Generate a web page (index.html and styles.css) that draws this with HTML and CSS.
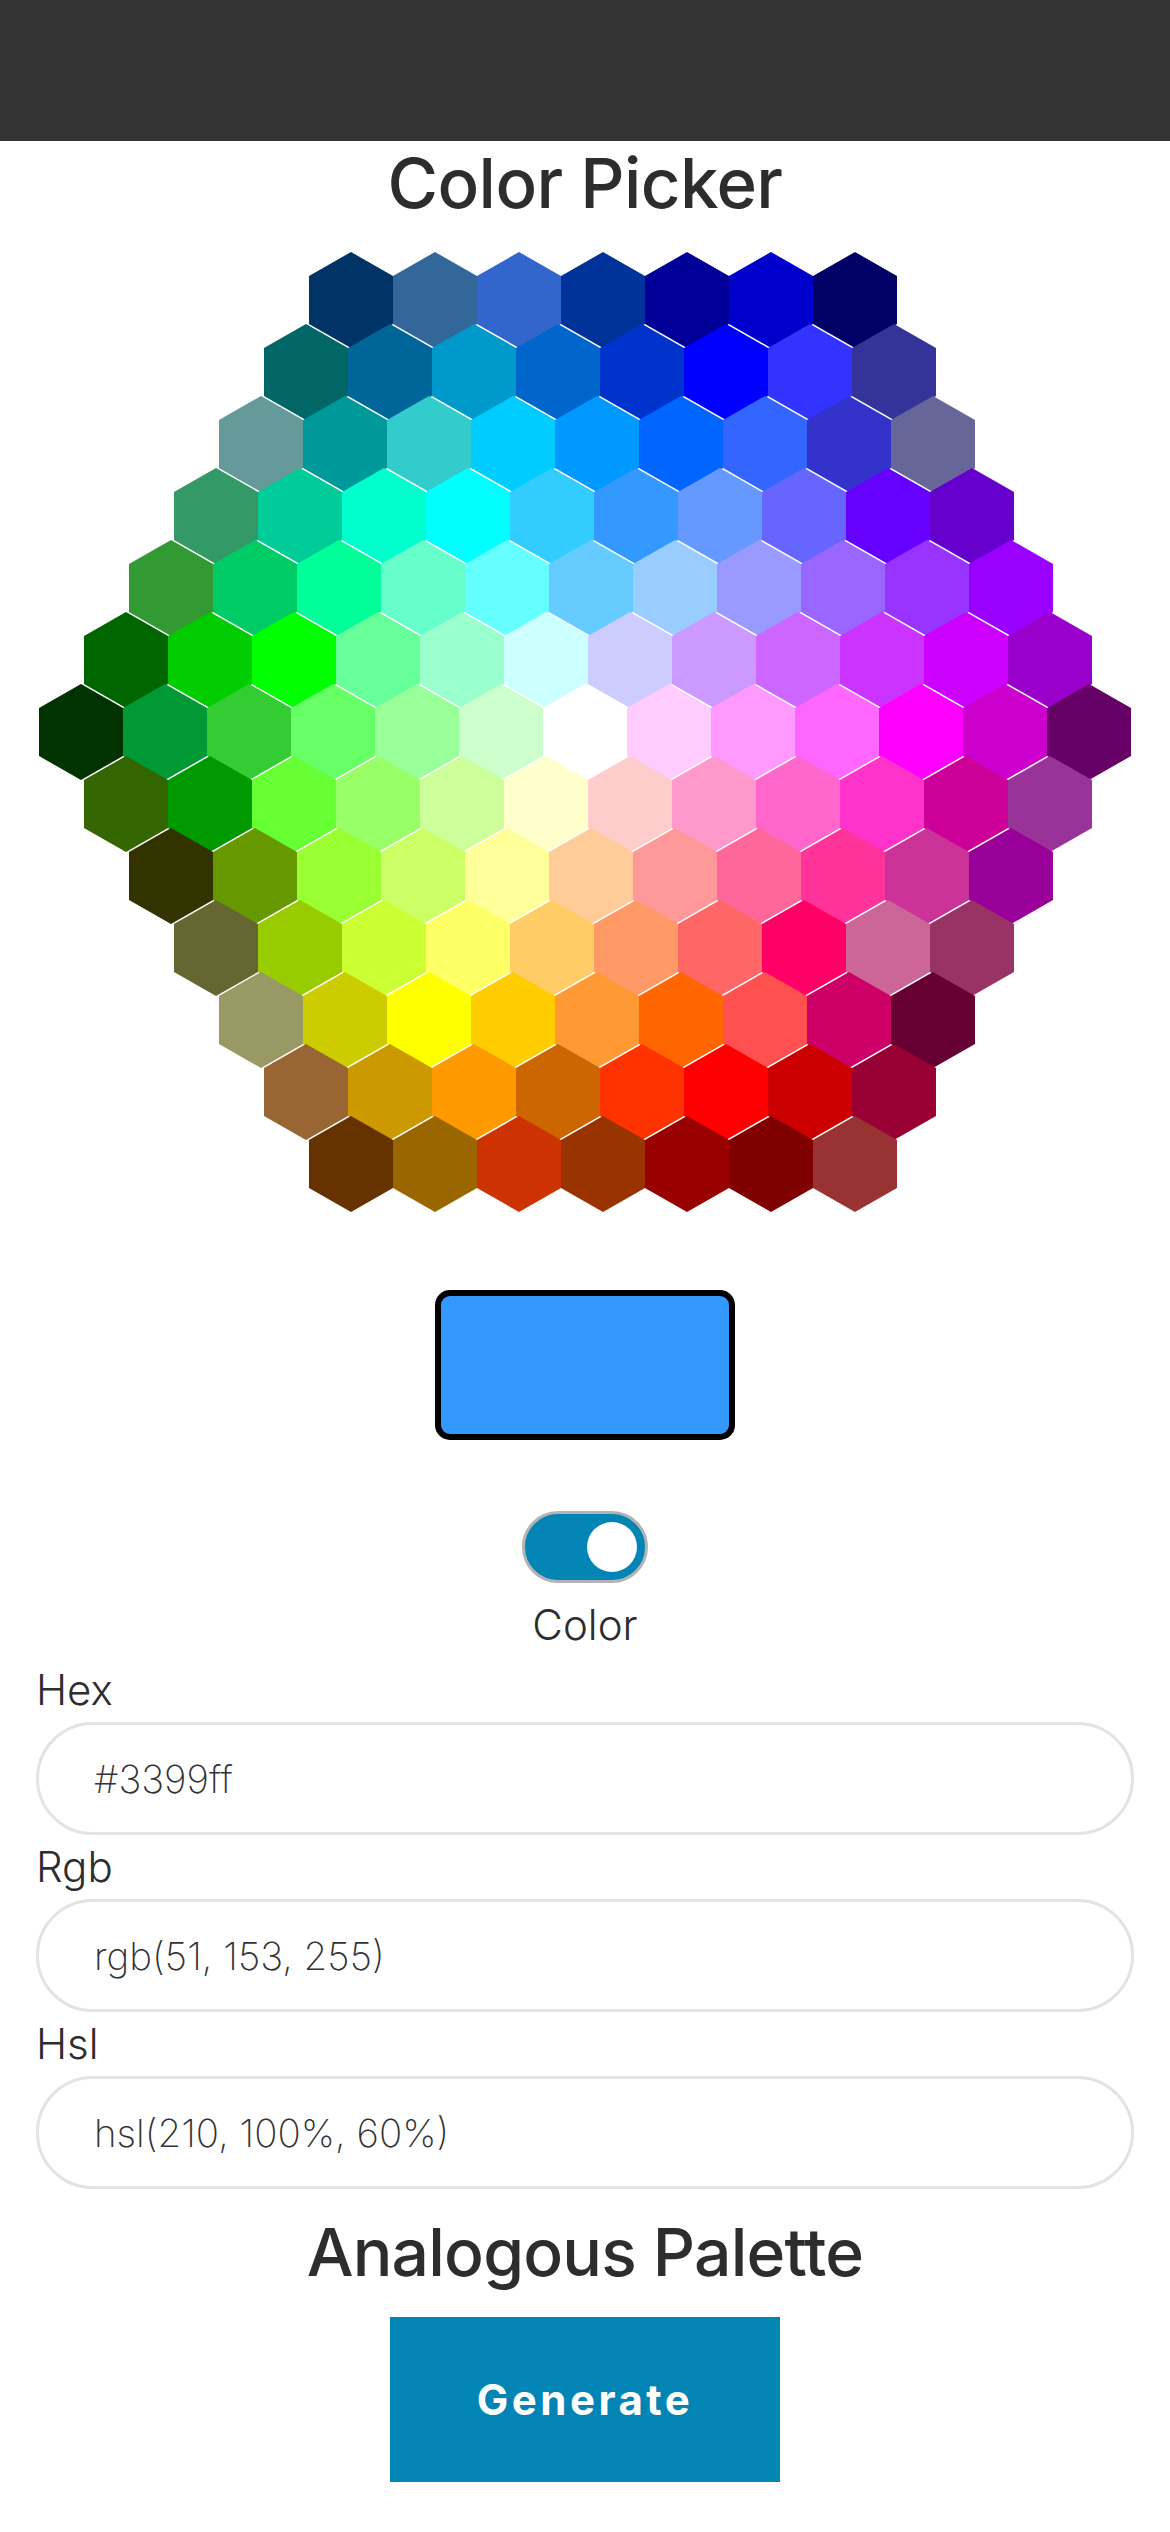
FILE: index.html
```html
<!DOCTYPE html>
<html lang="en">
<head>
<meta charset="utf-8">
<title>Color Picker</title>
<link rel="stylesheet" href="styles.css">
</head>
<body>
<header class="topbar"></header>
<main class="page">
  <h1 class="title">Color Picker</h1>
  <div class="map">
    <div class="row row-1">
      <div class="hex" style="background:#003366"></div><div class="hex" style="background:#336699"></div><div class="hex" style="background:#3366cc"></div><div class="hex" style="background:#003399"></div><div class="hex" style="background:#000099"></div><div class="hex" style="background:#0000cc"></div><div class="hex" style="background:#000066"></div>
    </div>
    <div class="row row-2">
      <div class="hex" style="background:#006666"></div><div class="hex" style="background:#006699"></div><div class="hex" style="background:#0099cc"></div><div class="hex" style="background:#0066cc"></div><div class="hex" style="background:#0033cc"></div><div class="hex" style="background:#0000ff"></div><div class="hex" style="background:#3333ff"></div><div class="hex" style="background:#333399"></div>
    </div>
    <div class="row row-3">
      <div class="hex" style="background:#669999"></div><div class="hex" style="background:#009999"></div><div class="hex" style="background:#33cccc"></div><div class="hex" style="background:#00ccff"></div><div class="hex" style="background:#0099ff"></div><div class="hex" style="background:#0066ff"></div><div class="hex" style="background:#3366ff"></div><div class="hex" style="background:#3333cc"></div><div class="hex" style="background:#666699"></div>
    </div>
    <div class="row row-4">
      <div class="hex" style="background:#339966"></div><div class="hex" style="background:#00cc99"></div><div class="hex" style="background:#00ffcc"></div><div class="hex" style="background:#00ffff"></div><div class="hex" style="background:#33ccff"></div><div class="hex" style="background:#3399ff"></div><div class="hex" style="background:#6699ff"></div><div class="hex" style="background:#6666ff"></div><div class="hex" style="background:#6600ff"></div><div class="hex" style="background:#6600cc"></div>
    </div>
    <div class="row row-5">
      <div class="hex" style="background:#339933"></div><div class="hex" style="background:#00cc66"></div><div class="hex" style="background:#00ff99"></div><div class="hex" style="background:#66ffcc"></div><div class="hex" style="background:#66ffff"></div><div class="hex" style="background:#66ccff"></div><div class="hex" style="background:#99ccff"></div><div class="hex" style="background:#9999ff"></div><div class="hex" style="background:#9966ff"></div><div class="hex" style="background:#9933ff"></div><div class="hex" style="background:#9900ff"></div>
    </div>
    <div class="row row-6">
      <div class="hex" style="background:#006600"></div><div class="hex" style="background:#00cc00"></div><div class="hex" style="background:#00ff00"></div><div class="hex" style="background:#66ff99"></div><div class="hex" style="background:#99ffcc"></div><div class="hex" style="background:#ccffff"></div><div class="hex" style="background:#ccccff"></div><div class="hex" style="background:#cc99ff"></div><div class="hex" style="background:#cc66ff"></div><div class="hex" style="background:#cc33ff"></div><div class="hex" style="background:#cc00ff"></div><div class="hex" style="background:#9900cc"></div>
    </div>
    <div class="row row-7">
      <div class="hex" style="background:#003300"></div><div class="hex" style="background:#009933"></div><div class="hex" style="background:#33cc33"></div><div class="hex" style="background:#66ff66"></div><div class="hex" style="background:#99ff99"></div><div class="hex" style="background:#ccffcc"></div><div class="hex" style="background:#ffffff"></div><div class="hex" style="background:#ffccff"></div><div class="hex" style="background:#ff99ff"></div><div class="hex" style="background:#ff66ff"></div><div class="hex" style="background:#ff00ff"></div><div class="hex" style="background:#cc00cc"></div><div class="hex" style="background:#660066"></div>
    </div>
    <div class="row row-6">
      <div class="hex" style="background:#336600"></div><div class="hex" style="background:#009900"></div><div class="hex" style="background:#66ff33"></div><div class="hex" style="background:#99ff66"></div><div class="hex" style="background:#ccff99"></div><div class="hex" style="background:#ffffcc"></div><div class="hex" style="background:#ffcccc"></div><div class="hex" style="background:#ff99cc"></div><div class="hex" style="background:#ff66cc"></div><div class="hex" style="background:#ff33cc"></div><div class="hex" style="background:#cc0099"></div><div class="hex" style="background:#993399"></div>
    </div>
    <div class="row row-5">
      <div class="hex" style="background:#333300"></div><div class="hex" style="background:#669900"></div><div class="hex" style="background:#99ff33"></div><div class="hex" style="background:#ccff66"></div><div class="hex" style="background:#ffff99"></div><div class="hex" style="background:#ffcc99"></div><div class="hex" style="background:#ff9999"></div><div class="hex" style="background:#ff6699"></div><div class="hex" style="background:#ff3399"></div><div class="hex" style="background:#cc3399"></div><div class="hex" style="background:#990099"></div>
    </div>
    <div class="row row-4">
      <div class="hex" style="background:#666633"></div><div class="hex" style="background:#99cc00"></div><div class="hex" style="background:#ccff33"></div><div class="hex" style="background:#ffff66"></div><div class="hex" style="background:#ffcc66"></div><div class="hex" style="background:#ff9966"></div><div class="hex" style="background:#ff6666"></div><div class="hex" style="background:#ff0066"></div><div class="hex" style="background:#cc6699"></div><div class="hex" style="background:#993366"></div>
    </div>
    <div class="row row-3">
      <div class="hex" style="background:#999966"></div><div class="hex" style="background:#cccc00"></div><div class="hex" style="background:#ffff00"></div><div class="hex" style="background:#ffcc00"></div><div class="hex" style="background:#ff9933"></div><div class="hex" style="background:#ff6600"></div><div class="hex" style="background:#ff5050"></div><div class="hex" style="background:#cc0066"></div><div class="hex" style="background:#660033"></div>
    </div>
    <div class="row row-2">
      <div class="hex" style="background:#996633"></div><div class="hex" style="background:#cc9900"></div><div class="hex" style="background:#ff9900"></div><div class="hex" style="background:#cc6600"></div><div class="hex" style="background:#ff3300"></div><div class="hex" style="background:#ff0000"></div><div class="hex" style="background:#cc0000"></div><div class="hex" style="background:#990033"></div>
    </div>
    <div class="row row-1">
      <div class="hex" style="background:#663300"></div><div class="hex" style="background:#996600"></div><div class="hex" style="background:#cc3300"></div><div class="hex" style="background:#993300"></div><div class="hex" style="background:#990000"></div><div class="hex" style="background:#800000"></div><div class="hex" style="background:#993333"></div>
    </div>
  </div>
  <div class="swatch"></div>
  <div class="toggle-block">
    <div class="toggle"><span class="knob"></span></div>
    <div class="toggle-label">Color</div>
  </div>
  <form class="fields">
    <label class="field"><span class="field-label">Hex</span><input class="field-input" type="text" value="#3399ff" readonly></label>
    <label class="field"><span class="field-label">Rgb</span><input class="field-input" type="text" value="rgb(51, 153, 255)" readonly></label>
    <label class="field"><span class="field-label">Hsl</span><input class="field-input" type="text" value="hsl(210, 100%, 60%)" readonly></label>
  </form>
  <h2 class="subtitle">Analogous Palette</h2>
  <button class="generate" type="button">Generate</button>
</main>
</body>
</html>
```
FILE: styles.css
```css
* { box-sizing: border-box; }
html, body { margin: 0; padding: 0; background: #fff; }
body { font-family: Inter, "Liberation Sans", sans-serif; color: #2d2d2d; overflow: hidden; }
.topbar { height: 141px; background: #333333; }
.page { display: flex; flex-direction: column; align-items: center; }
.title { margin: 0; height: 111px; font-size: 69px; line-height: 84px; font-weight: 500; letter-spacing: -0.6px; text-align: center; }
.map { width: 100%; display: flex; flex-direction: column; }
.row { display: flex; height: 96px; margin-top: -24px; }
.row:first-child { margin-top: 0; }
.row-1 { margin-left: 309px; }
.row-2 { margin-left: 264px; }
.row-3 { margin-left: 219px; }
.row-4 { margin-left: 174px; }
.row-5 { margin-left: 129px; }
.row-6 { margin-left: 84px; }
.row-7 { margin-left: 39px; }
.hex { flex: 0 0 84px; height: 96px; clip-path: polygon(50% 0, 100% 25%, 100% 75%, 50% 100%, 0 75%, 0 25%); }
.swatch { width: 300px; height: 150px; margin-top: 78px; background: #3399ff; border: 6px solid #000; border-radius: 15px; }
.toggle-block { margin-top: 71px; display: flex; flex-direction: column; align-items: center; }
.toggle { width: 126px; height: 72px; padding: 8px; display: flex; justify-content: flex-end; align-items: center; background: #0284b5; border: 3px solid #b3b3b3; border-radius: 36px; }
.knob { width: 50px; height: 50px; border-radius: 50%; background: #fff; }
.toggle-label { margin-top: 18px; font-size: 42px; line-height: 48px; font-weight: 300; }
.fields { width: 100%; padding: 0 36px; display: flex; flex-direction: column; margin-top: 9px; }
.field { display: flex; flex-direction: column; }
.field-label { font-size: 42px; line-height: 64px; font-weight: 300; }
.field-input { width: 100%; height: 113px; padding: 0 55px; font-family: inherit; font-size: 38.5px; font-weight: 200; color: #333; background: #fff; border: 3px solid #e3e3e3; border-radius: 57px; outline: none; }
.subtitle { margin: 21px 0 0; font-size: 66px; line-height: 84px; font-weight: 500; letter-spacing: -0.8px; text-align: center; }
.generate { width: 390px; height: 165px; margin-top: 23px; border: 0; background: #0284b5; color: #fff; font-family: inherit; font-size: 42px; font-weight: 700; letter-spacing: 3.5px; }
```
